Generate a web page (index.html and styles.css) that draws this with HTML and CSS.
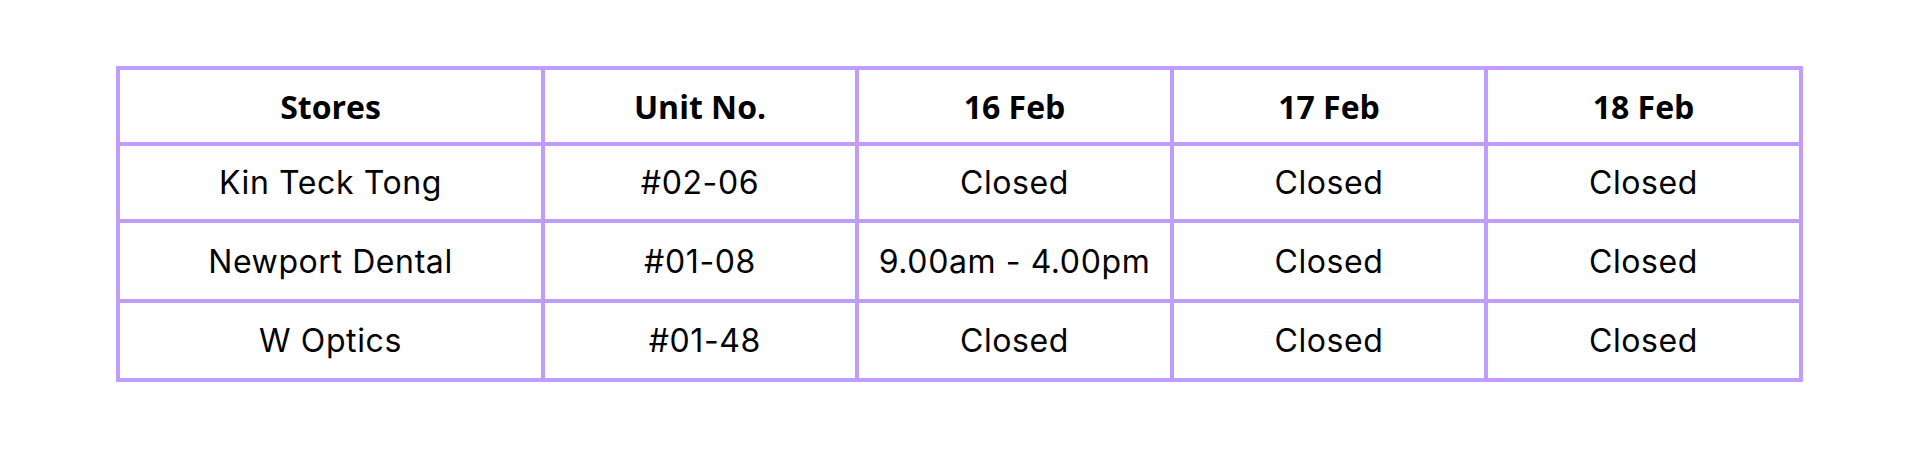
FILE: index.html
```html
<!DOCTYPE html>
<html lang="en">
<head>
<meta charset="utf-8">
<title>Store hours</title>
<link rel="stylesheet" href="styles.css">
</head>
<body>
<div class="page">
  <div class="table">
    <div class="cell head">Stores</div>
    <div class="cell head">Unit No.</div>
    <div class="cell head">16 Feb</div>
    <div class="cell head">17 Feb</div>
    <div class="cell head">18 Feb</div>

    <div class="cell">Kin Teck Tong</div>
    <div class="cell">#02-06</div>
    <div class="cell">Closed</div>
    <div class="cell">Closed</div>
    <div class="cell">Closed</div>

    <div class="cell">Newport Dental</div>
    <div class="cell">#01-08</div>
    <div class="cell">9.00am - 4.00pm</div>
    <div class="cell">Closed</div>
    <div class="cell">Closed</div>

    <div class="cell">W Optics</div>
    <div class="cell">&nbsp;#01-48</div>
    <div class="cell">Closed</div>
    <div class="cell">Closed</div>
    <div class="cell">Closed</div>
  </div>
</div>
</body>
</html>
```
FILE: styles.css
```css
html, body {
  margin: 0;
  padding: 0;
  background: #ffffff;
}

.page {
  width: 1920px;
  height: 449px;
  padding: 66px 0 0 116px;
  box-sizing: border-box;
}

.table {
  display: grid;
  grid-template-columns: 421px 310px 311px 310px 311px;
  grid-template-rows: 72px 73px 76px 75px;
  gap: 4px;
  padding: 4px;
  width: max-content;
  background: #c09cfb;
}

.cell {
  background: #ffffff;
  display: flex;
  align-items: center;
  justify-content: center;
  font-family: "Inter", "Liberation Sans", sans-serif;
  font-size: 32px;
  letter-spacing: 0.6px;
  color: #000000;
  white-space: pre;
}

.cell.head {
  font-family: "Open Sans", "Liberation Sans", sans-serif;
  font-size: 32px;
  letter-spacing: 0;
  font-weight: 700;
}
```
